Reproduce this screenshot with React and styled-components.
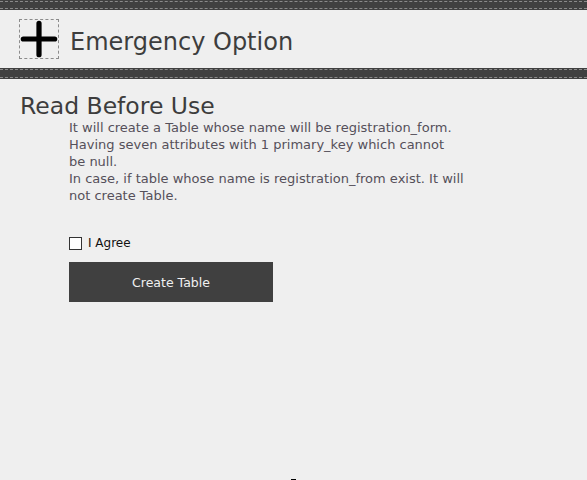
import React from 'react'
import { styled, createGlobalStyle } from 'styled-components'

const GlobalStyle = createGlobalStyle`
body {
  margin: 0;
  background: #efefef;
  font-family: "DejaVu Sans", sans-serif;
}
`;

const Page = styled.div`
width: 587px;
height: 480px;
overflow: hidden;
display: flex;
flex-direction: column;
`;

const Bar = styled.div`
height: ${(p) => p.$h}px;
box-sizing: border-box;
background: #404040;
padding: 1px 0;
flex-shrink: 0;
`;

const BarInner = styled.div`
height: 100%;
box-sizing: border-box;
border-top: 1px dashed #8a8a8a;
border-bottom: 1px dashed #8a8a8a;
`;

const Header = styled.div`
height: 60px;
display: flex;
align-items: center;
padding-left: 19px;
gap: 11px;
`;

const IconBox = styled.div`
width: 40px;
height: 40px;
box-sizing: border-box;
border: 1px dashed #8c8c8c;
display: flex;
align-items: center;
justify-content: center;
`;

const Title = styled.h1`
margin: 0;
padding-top: 5px;
font-size: 24px;
font-weight: normal;
color: #3d3d3d;
`;

const Main = styled.div`
padding: 14px 0 0 20px;
`;

const Heading = styled.h2`
margin: 0;
font-size: 23.5px;
font-weight: normal;
color: #3d3d3d;
line-height: 26px;
`;

const Body = styled.div`
margin-left: 49px;
width: 410px;
`;

const Note = styled.p`
margin: 0;
font-size: 13px;
line-height: 17px;
color: #55505a;
`;

const AgreeRow = styled.label`
display: flex;
align-items: center;
gap: 6px;
margin-top: 32px;
font-size: 12px;
color: #111;
`;

const Box = styled.input`
margin: 0;
width: 13px;
height: 13px;
appearance: none;
border: 1px solid #333;
background: #fff;
box-sizing: border-box;
`;

const Button = styled.button`
margin-top: 12px;
width: 204px;
height: 40px;
border: none;
background: #404040;
color: #f0f0f0;
font-family: inherit;
font-size: 12.5px;
`;

const Foot = styled.div`
margin: 177px auto 0;
width: 5px;
height: 1px;
background: #000;
`;

export default function App() {
  return (
    <Page>
      <GlobalStyle />
      <Bar $h={10}><BarInner /></Bar>
      <Header>
        <IconBox>
          <svg width="40" height="40" viewBox="0 0 40 40">
            <path d="M20 3.5V36.5M3.5 20H36.5" stroke="#000" strokeWidth="5.5" strokeLinecap="round" />
          </svg>
        </IconBox>
        <Title>Emergency Option</Title>
      </Header>
      <Bar $h={11}><BarInner /></Bar>
      <Main>
        <Heading>Read Before Use</Heading>
        <Body>
          <Note>
            It will create a Table whose name will be registration_form.<br />
            Having seven attributes with 1 primary_key which cannot<br />
            be null.
          </Note>
          <Note>
            In case, if table whose name is registration_from exist. It will<br />
            not create Table.
          </Note>
          <AgreeRow>
            <Box type="checkbox" />
            I Agree
          </AgreeRow>
          <Button>Create Table</Button>
        </Body>
      </Main>
      <Foot />
    </Page>
  )
}
